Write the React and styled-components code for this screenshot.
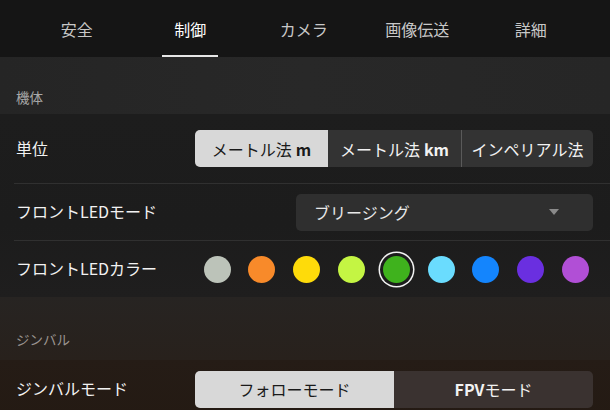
import React from "react";
import styled, { createGlobalStyle } from "styled-components";

const Global = createGlobalStyle`
  html, body { margin: 0; padding: 0; background: #1c1c1c; }
  body { font-family: "Noto Sans CJK JP", "Noto Sans", sans-serif; width: 610px; height: 410px; overflow: hidden; }
  * { box-sizing: border-box; }
`;

const Page = styled.div`
  width: 610px;
  height: 410px;
  display: flex;
  flex-direction: column;
  overflow: hidden;
`;

const TabBar = styled.div`
  height: 57px;
  flex-shrink: 0;
  background: #151515;
  display: grid;
  grid-template-columns: repeat(5, 113.5px);
  padding-left: 20px;
`;

const Tab = styled.div`
  position: relative;
  display: flex;
  align-items: center;
  justify-content: center;
  font-size: 16px;
  color: ${(p) => (p.$active ? "#ffffff" : "#c8c8c8")};
  &::after {
    content: "";
    display: ${(p) => (p.$active ? "block" : "none")};
    position: absolute;
    bottom: 0;
    left: 50%;
    width: 56px;
    margin-left: -28px;
    height: 2px;
    background: #e6e6e6;
  }
`;

const SectionHeader = styled.div`
  height: ${(p) => p.$h}px;
  flex-shrink: 0;
  display: flex;
  align-items: flex-end;
  padding: 0 0 ${(p) => p.$pb}px 16px;
  font-size: 13.5px;
  color: ${(p) => p.$color};
  background: ${(p) => p.$bg};
`;

const Panel = styled.div`
  flex-shrink: 0;
  background: ${(p) => p.$bg};
  display: flex;
  flex-direction: column;
  padding-left: 14px;
`;

const Row = styled.div`
  height: ${(p) => p.$h}px;
  display: flex;
  align-items: center;
  justify-content: space-between;
  padding-right: 17px;
  padding-left: 2px;
  border-top: ${(p) => (p.$sep ? "1px solid #303030" : "none")};
`;

const Label = styled.div`
  font-size: 16px;
  line-height: 20px;
  padding-bottom: 2px;
  color: #f2f2f2;
`;

const Segmented = styled.div`
  width: 398px;
  height: 37px;
  display: grid;
  grid-template-columns: ${(p) => p.$cols};
  border-radius: 5px;
  overflow: hidden;
  background: ${(p) => p.$bg};
`;

const Segment = styled.div`
  display: flex;
  align-items: center;
  justify-content: center;
  font-size: 16px;
  color: ${(p) => (p.$active ? "#1a1a1a" : "#f2f2f2")};
  background: ${(p) => (p.$active ? "#d8d8d8" : "transparent")};
  border-left: ${(p) => (p.$divider ? "1px solid #5a5a5a" : "none")};
  white-space: nowrap;
`;

const Unit = styled.b`
  font-weight: 700;
  margin-left: ${(p) => (p.$tight ? 0 : 4)}px;
`;

const Dropdown = styled.div`
  width: 297px;
  height: 37px;
  border-radius: 5px;
  background: #2f2f2f;
  display: flex;
  align-items: center;
  justify-content: space-between;
  padding: 0 34px 0 18px;
  font-size: 16px;
  color: #e8e8e8;
`;

const Caret = styled.span`
  width: 0;
  height: 0;
  border-left: 5.5px solid transparent;
  border-right: 5.5px solid transparent;
  border-top: 6px solid #8a8a8a;
`;

const Dots = styled.div`
  display: flex;
  align-items: center;
  gap: 17.8px;
  margin-right: 4px;
`;

const Dot = styled.div`
  width: 27px;
  height: 27px;
  border-radius: 50%;
  background: ${(p) => p.$c};
  box-shadow: ${(p) => (p.$sel ? "0 0 0 3px #1c1c1c, 0 0 0 4.5px #f2f2f2" : "none")};
`;

const colors = ["#bcc3b9", "#f88a2a", "#fedb0a", "#c4f543", "#3fb21d", "#6adcfe", "#1485fd", "#6a2fe0", "#b14fd6"];

export default function App() {
  return (
    <>
      <Global />
      <Page>
        <TabBar>
          <Tab>安全</Tab>
          <Tab $active>制御</Tab>
          <Tab>カメラ</Tab>
          <Tab>画像伝送</Tab>
          <Tab>詳細</Tab>
        </TabBar>
        <SectionHeader $h={57} $pb={7} $color="#a8a8a8" $bg="linear-gradient(90deg, #252525, #282828 50%, #262626)">
          機体
        </SectionHeader>
        <Panel $bg="linear-gradient(180deg, #1d1d1d, #1c1c1c 60%, #1f1e1e)">
          <Row $h={69}>
            <Label>単位</Label>
            <Segmented $cols="133px 133px 132px" $bg="#333333">
              <Segment $active>メートル法<Unit>m</Unit></Segment>
              <Segment>メートル法<Unit>km</Unit></Segment>
              <Segment $divider>インペリアル法</Segment>
            </Segmented>
          </Row>
          <Row $h={57} $sep>
            <Label>フロントLEDモード</Label>
            <Dropdown>
              <span>ブリージング</span>
              <Caret />
            </Dropdown>
          </Row>
          <Row $h={57} $sep>
            <Label>フロントLEDカラー</Label>
            <Dots>
              {colors.map((c, i) => (
                <Dot key={c} $c={c} $sel={i === 4} />
              ))}
            </Dots>
          </Row>
        </Panel>
        <SectionHeader $h={63} $pb={11} $color="#9a9490" $bg="linear-gradient(180deg, #272422, #28211c)">
          ジンバル
        </SectionHeader>
        <Panel $bg="linear-gradient(180deg, #251c16, #241a13)">
          <Row $h={58}>
            <Label>ジンバルモード</Label>
            <Segmented $cols="199px 199px" $bg="#3a3230">
              <Segment $active>フォローモード</Segment>
              <Segment><Unit $tight>FPV</Unit>モード</Segment>
            </Segmented>
          </Row>
        </Panel>
      </Page>
    </>
  );
}
